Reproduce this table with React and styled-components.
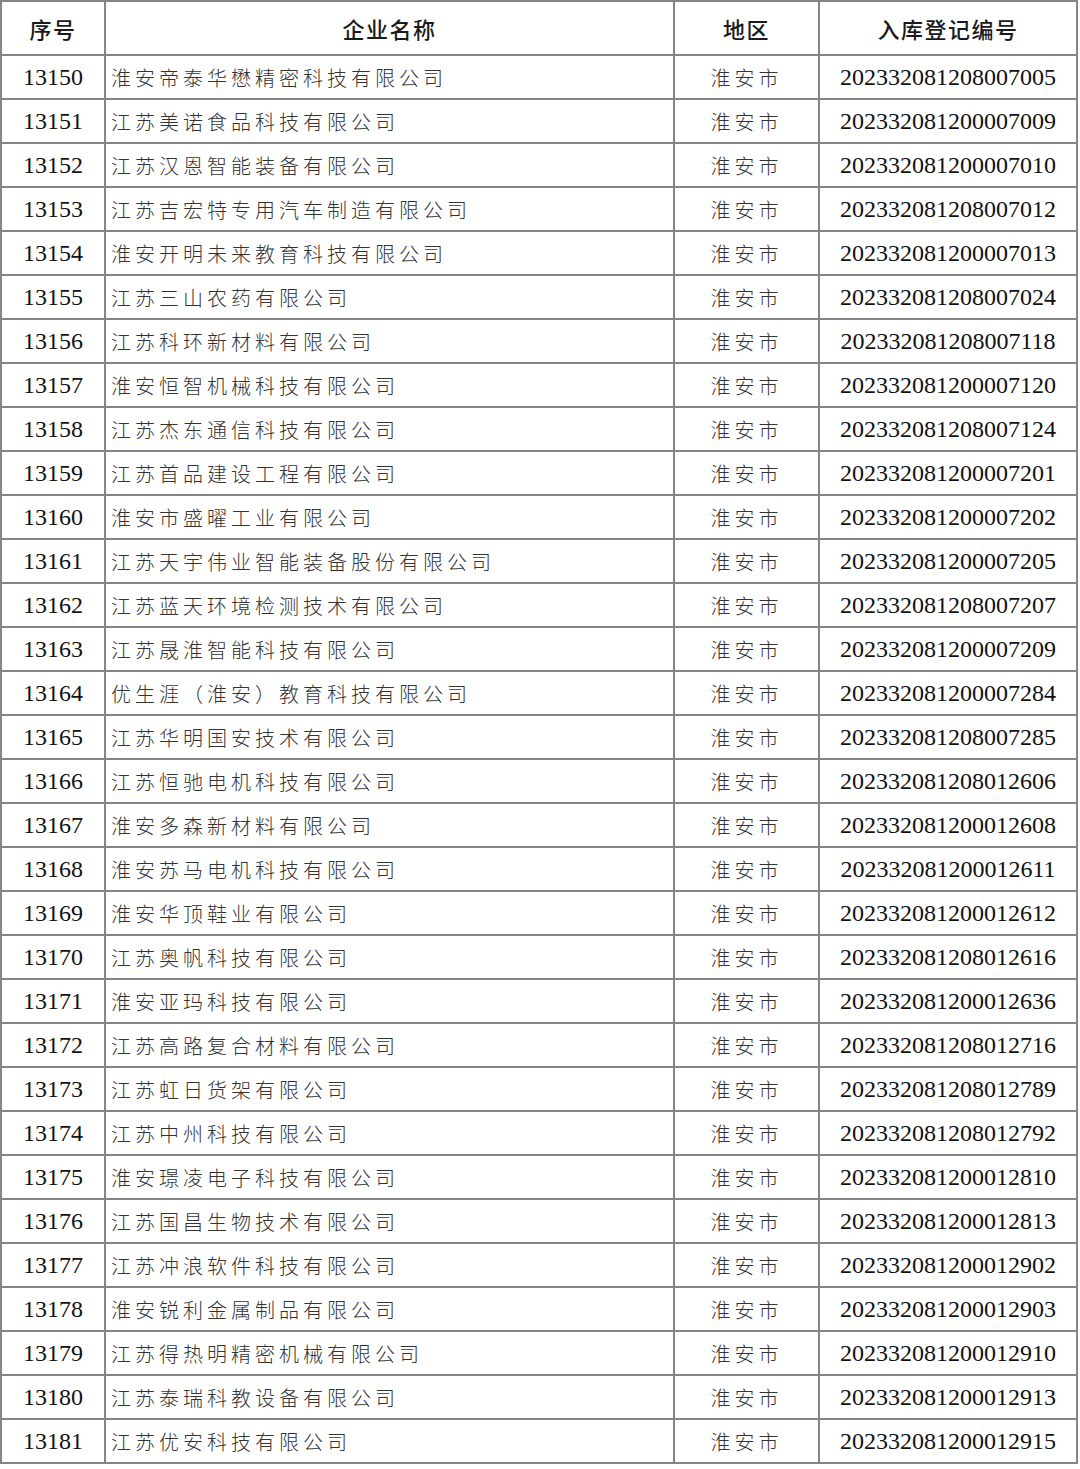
import React from 'react';
import styled, { createGlobalStyle } from 'styled-components';

const GlobalStyle = createGlobalStyle`
  html, body {
    margin: 0;
    padding: 0;
    background: #fff;
  }
`;

const entries = [
  ['淮安帝泰华懋精密科技有限公司', '202332081208007005'],
  ['江苏美诺食品科技有限公司', '202332081200007009'],
  ['江苏汉恩智能装备有限公司', '202332081200007010'],
  ['江苏吉宏特专用汽车制造有限公司', '202332081208007012'],
  ['淮安开明未来教育科技有限公司', '202332081200007013'],
  ['江苏三山农药有限公司', '202332081208007024'],
  ['江苏科环新材料有限公司', '202332081208007118'],
  ['淮安恒智机械科技有限公司', '202332081200007120'],
  ['江苏杰东通信科技有限公司', '202332081208007124'],
  ['江苏首品建设工程有限公司', '202332081200007201'],
  ['淮安市盛曜工业有限公司', '202332081200007202'],
  ['江苏天宇伟业智能装备股份有限公司', '202332081200007205'],
  ['江苏蓝天环境检测技术有限公司', '202332081208007207'],
  ['江苏晟淮智能科技有限公司', '202332081200007209'],
  ['优生涯（淮安）教育科技有限公司', '202332081200007284'],
  ['江苏华明国安技术有限公司', '202332081208007285'],
  ['江苏恒驰电机科技有限公司', '202332081208012606'],
  ['淮安多森新材料有限公司', '202332081200012608'],
  ['淮安苏马电机科技有限公司', '202332081200012611'],
  ['淮安华顶鞋业有限公司', '202332081200012612'],
  ['江苏奥帆科技有限公司', '202332081208012616'],
  ['淮安亚玛科技有限公司', '202332081200012636'],
  ['江苏高路复合材料有限公司', '202332081208012716'],
  ['江苏虹日货架有限公司', '202332081208012789'],
  ['江苏中州科技有限公司', '202332081208012792'],
  ['淮安璟凌电子科技有限公司', '202332081200012810'],
  ['江苏国昌生物技术有限公司', '202332081200012813'],
  ['江苏冲浪软件科技有限公司', '202332081200012902'],
  ['淮安锐利金属制品有限公司', '202332081200012903'],
  ['江苏得热明精密机械有限公司', '202332081200012910'],
  ['江苏泰瑞科教设备有限公司', '202332081200012913'],
  ['江苏优安科技有限公司', '202332081200012915'],
].map(([name, code], i) => ({
  no: String(13150 + i),
  name,
  region: '淮安市',
  code,
}));

const Page = styled.div`
  width: 1080px;
`;

const Table = styled.table`
  width: 1078px;
  border-collapse: collapse;
  table-layout: fixed;
`;

const HeadCell = styled.th`
  height: 52px;
  padding: 0;
  border: 2px solid #858585;
  font-family: 'Noto Sans CJK SC', 'Noto Sans', sans-serif;
  font-weight: 500;
  font-size: 22px;
  letter-spacing: 1.5px;
  color: #1a1a1a;
  text-align: center;
  vertical-align: middle;
`;

const Cell = styled.td`
  height: 42px;
  padding: ${(p) => (p.$left ? '0 0 0 5px' : '0')};
  border: 2px solid #858585;
  text-align: ${(p) => (p.$left ? 'left' : 'center')};
  vertical-align: middle;
  white-space: nowrap;
  overflow: hidden;
`;

const Num = styled.span`
  font-family: 'Liberation Serif', 'Times New Roman', serif;
  font-size: 24px;
  color: #111;
`;

const Han = styled.span`
  font-family: 'Noto Sans CJK SC', sans-serif;
  font-weight: 300;
  font-size: 20px;
  letter-spacing: 4px;
  color: #333;
`;

export default function App() {
  return (
    <Page>
      <GlobalStyle />
      <Table>
        <colgroup>
          <col style={{ width: 104 }} />
          <col style={{ width: 569 }} />
          <col style={{ width: 145 }} />
          <col style={{ width: 258 }} />
        </colgroup>
        <thead>
          <tr>
            <HeadCell>序号</HeadCell>
            <HeadCell>企业名称</HeadCell>
            <HeadCell>地区</HeadCell>
            <HeadCell>入库登记编号</HeadCell>
          </tr>
        </thead>
        <tbody>
          {entries.map((r) => (
            <tr key={r.no}>
              <Cell>
                <Num>{r.no}</Num>
              </Cell>
              <Cell $left>
                <Han>{r.name}</Han>
              </Cell>
              <Cell>
                <Han>{r.region}</Han>
              </Cell>
              <Cell>
                <Num>{r.code}</Num>
              </Cell>
            </tr>
          ))}
        </tbody>
      </Table>
    </Page>
  );
}
